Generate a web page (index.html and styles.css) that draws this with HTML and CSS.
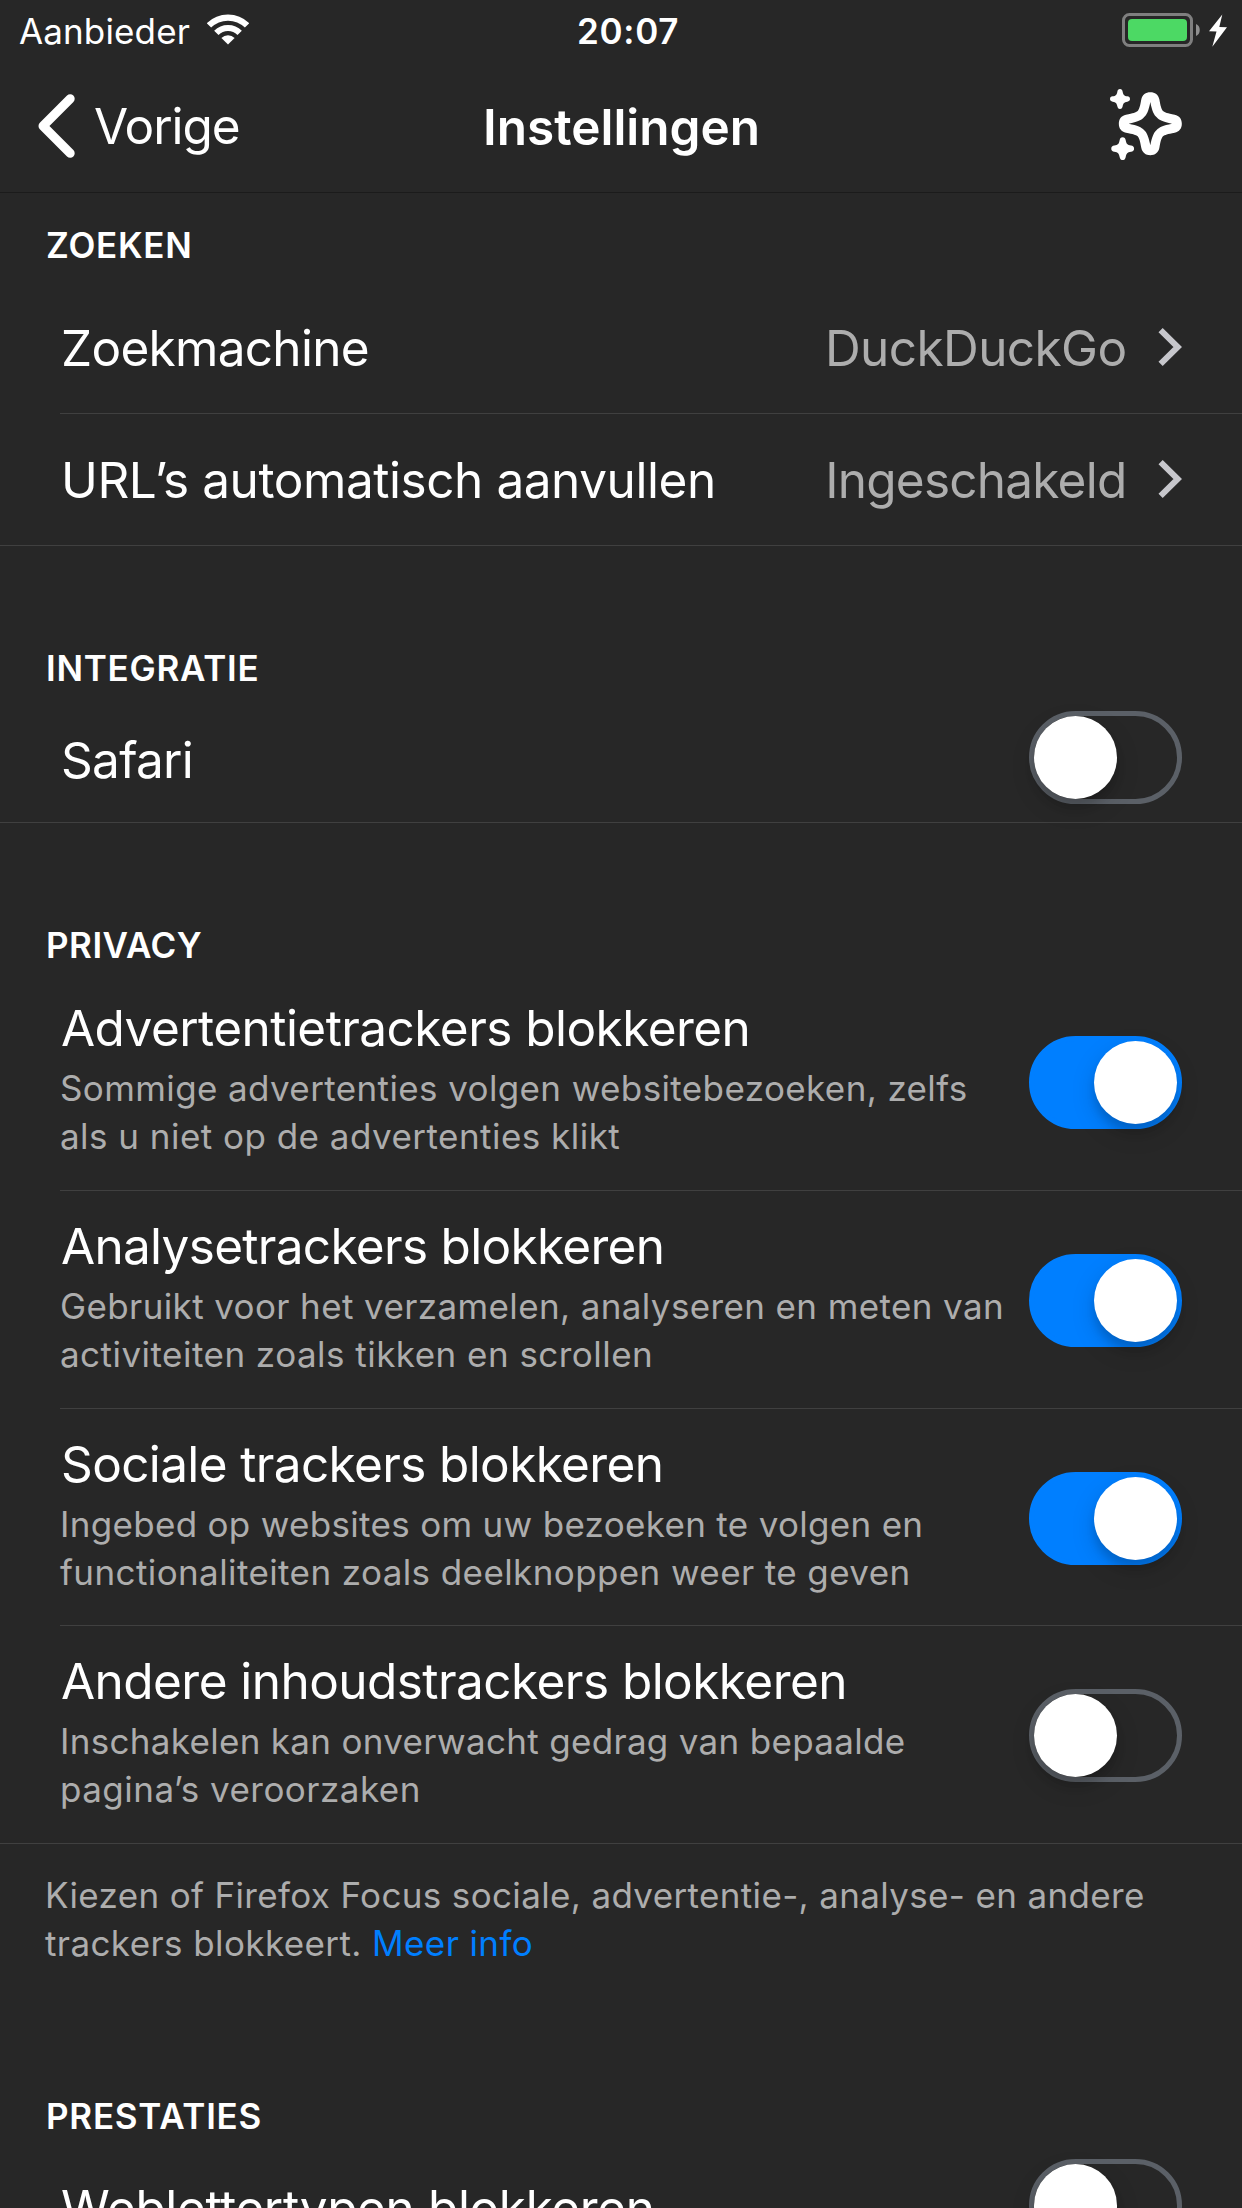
FILE: index.html
```html
<!DOCTYPE html>
<html lang="nl">
<head>
<meta charset="utf-8">
<title>Instellingen</title>
<link rel="stylesheet" href="styles.css">
</head>
<body>
<div class="screen">
  <div class="status">
    <div class="carrier">
      <span>Aanbieder</span>
      <svg class="wifi" viewBox="-63 -91 126 92" width="42" height="31">
        <g fill="none" stroke="#fff" stroke-width="18.5">
          <path d="M-57.2 -57.2A81 81 0 0 1 57.2 -57.2"/>
          <path d="M-35 -35A49.5 49.5 0 0 1 35 -35"/>
        </g>
        <path fill="#fff" d="M0 0L-19.8 -19.8A28 28 0 0 1 19.8 -19.8Z"/>
      </svg>
    </div>
    <span class="time">20:07</span>
    <svg class="battery" viewBox="0 0 108 36" width="108" height="36">
      <rect x="1.5" y="1.5" width="68" height="31" rx="6" fill="none" stroke="#7f7f7f" stroke-width="3"/>
      <rect x="6" y="6" width="59" height="22" rx="4" fill="#4cd964"/>
      <path fill="#8f8f8f" d="M74 11C79 12.5 79 21.5 74 23Z"/>
      <path fill="#fff" d="M100.3 1.5L87 18.3L94.5 18.5L90.3 33.7L105 14.3L97.3 14Z"/>
    </svg>
  </div>

  <header class="nav">
    <svg class="back-icon" viewBox="0 0 37 64" width="37" height="64">
      <path d="M32.2 4.8L5 32L32.2 59.2" fill="none" stroke="#fff" stroke-width="9" stroke-linecap="round" stroke-linejoin="round"/>
    </svg>
    <span class="back">Vorige</span>
    <h1 class="title">Instellingen</h1>
    <svg class="sparkle" viewBox="-121 -104 216 214" width="72" height="71.33">
      <g fill="#fff">
        <path fill-rule="evenodd" d="M0 -94.5C14 -94.5 24 -87 27 -73C31 -51 33 -44 38 -38C44 -33 51 -31 73 -27C87 -24 94.5 -14 94.5 0C94.5 14 87 24 73 27C51 31 44 33 38 38C33 44 31 51 27 73C24 87 14 94.5 0 94.5C-14 94.5 -24 87 -27 73C-31 51 -33 44 -38 38C-44 33 -51 31 -73 27C-87 24 -94.5 14 -94.5 0C-94.5 -14 -87 -24 -73 -27C-51 -31 -44 -33 -38 -38C-33 -44 -31 -51 -27 -73C-24 -87 -14 -94.5 0 -94.5ZM0 -65C5 -38 11 -26 19 -19C26 -11 38 -5 65 0C38 5 26 11 19 19C11 26 5 38 0 65C-5 38 -11 26 -19 19C-26 11 -38 5 -65 0C-38 -5 -26 -11 -19 -19C-11 -26 -5 -38 0 -65Z"/>
        <path transform="translate(-91 -74)" d="M0 -30C5 -30 7 -27 8 -22C10 -12 12 -10 22 -8C27 -7 30 -5 30 0C30 5 27 7 22 8C12 10 10 12 8 22C7 27 5 30 0 30C-5 30 -7 27 -8 22C-10 12 -12 10 -22 8C-27 7 -30 5 -30 0C-30 -5 -27 -7 -22 -8C-12 -10 -10 -12 -8 -22C-7 -27 -5 -30 0 -30Z"/>
        <path transform="translate(-83 75) scale(1.14)" d="M0 -30C5 -30 7 -27 8 -22C10 -12 12 -10 22 -8C27 -7 30 -5 30 0C30 5 27 7 22 8C12 10 10 12 8 22C7 27 5 30 0 30C-5 30 -7 27 -8 22C-10 12 -12 10 -22 8C-27 7 -30 5 -30 0C-30 -5 -27 -7 -22 -8C-12 -10 -10 -12 -8 -22C-7 -27 -5 -30 0 -30Z"/>
      </g>
    </svg>
  </header>

  <main>
    <section>
      <h2 class="heading first">ZOEKEN</h2>
      <div class="row link">
        <span class="label search">Zoekmachine</span>
        <span class="value">DuckDuckGo</span>
        <svg class="chevron" viewBox="0 0 24 40" width="24" height="40"><path d="M2.6 3.1L19.8 20L2.6 36.9" fill="none" stroke="#c7c7cc" stroke-width="6"/></svg>
      </div>
      <div class="row link last">
        <span class="label auto">URL’s automatisch aanvullen</span>
        <span class="value enabled">Ingeschakeld</span>
        <svg class="chevron" viewBox="0 0 24 40" width="24" height="40"><path d="M2.6 3.1L19.8 20L2.6 36.9" fill="none" stroke="#c7c7cc" stroke-width="6"/></svg>
      </div>
    </section>

    <section>
      <h2 class="heading">INTEGRATIE</h2>
      <div class="row single last">
        <span class="label search">Safari</span>
        <span class="switch"><i class="knob"></i></span>
      </div>
    </section>

    <section>
      <h2 class="heading privacy">PRIVACY</h2>
      <div class="row tracker">
        <div class="text">
          <span class="label">Advertentietrackers blokkeren</span>
          <p class="desc">Sommige advertenties volgen websitebezoeken, zelfs<br><span class="loose">als u niet op de advertenties klikt</span></p>
        </div>
        <span class="switch on"><i class="knob"></i></span>
      </div>
      <div class="row tracker">
        <div class="text">
          <span class="label analyse">Analysetrackers blokkeren</span>
          <p class="desc">Gebruikt voor het verzamelen, analyseren en meten van<br><span class="loose">activiteiten zoals tikken en scrollen</span></p>
        </div>
        <span class="switch on"><i class="knob"></i></span>
      </div>
      <div class="row tracker short">
        <div class="text">
          <span class="label social">Sociale trackers blokkeren</span>
          <p class="desc content">Ingebed op websites om uw bezoeken te volgen en<br><span class="medium">functionaliteiten zoals deelknoppen weer te geven</span></p>
        </div>
        <span class="switch on"><i class="knob"></i></span>
      </div>
      <div class="row tracker last">
        <div class="text">
          <span class="label">Andere inhoudstrackers blokkeren</span>
          <p class="desc content">Inschakelen kan onverwacht gedrag van bepaalde<br><span class="loose">pagina’s veroorzaken</span></p>
        </div>
        <span class="switch"><i class="knob"></i></span>
      </div>
      <p class="footer">Kiezen of Firefox Focus sociale, advertentie-, analyse- en andere<br><span class="medium">trackers blokkeert. <a class="more">Meer info</a></span></p>
    </section>

    <section>
      <h2 class="heading">PRESTATIES</h2>
      <div class="row single last">
        <span class="label fonts">Weblettertypen blokkeren</span>
        <span class="switch"><i class="knob"></i></span>
      </div>
    </section>
  </main>
</div>
</body>
</html>
```
FILE: styles.css
```css
* {
  box-sizing: border-box;
}

body {
  margin: 0;
  background: #272727;
  color: #fff;
  font-family: Inter, "Liberation Sans", sans-serif;
  font-size: 49.5px;
  line-height: 60px;
}

h1, h2, p {
  margin: 0;
  font-weight: 400;
}

svg {
  display: block;
  flex: none;
}

.screen {
  width: 1242px;
  height: 2208px;
  overflow: hidden;
}

/* Status bar */
.status {
  display: flex;
  align-items: flex-start;
  height: 60px;
  padding: 9px 14px 0 19px;
  font-size: 35px;
  line-height: 44px;
}

.carrier {
  display: flex;
  gap: 17px;
  width: 558px;
  letter-spacing: 0.13px;
}

.wifi {
  margin-top: 5px;
}

.time {
  font-weight: 600;
  letter-spacing: 0.7px;
}

.battery {
  margin: 4px -2px 0 auto;
}

/* Navigation bar */
.nav {
  display: flex;
  align-items: flex-start;
  height: 133px;
  padding: 32px 60px 0 38px;
  border-bottom: 1px solid #1b1b1b;
}

.back-icon {
  margin-top: 2px;
}

.back {
  width: 389px;
  margin-top: 4px;
  margin-left: 19px;
  letter-spacing: -1.07px;
}

.title {
  margin-top: 5px;
  font-size: 49.5px;
  font-weight: 600;
}

.sparkle {
  margin-top: -3px;
  margin-left: auto;
}

/* Sections */
.heading {
  height: 150px;
  padding: 100px 46px 0;
  font-size: 35px;
  font-weight: 600;
  line-height: 44px;
  letter-spacing: 0.75px;
}

.heading.first {
  height: 89px;
  padding-top: 30px;
}

.heading.privacy {
  letter-spacing: 0.5px;
}

.row {
  display: flex;
  align-items: flex-start;
  margin-left: 60px;
  padding-right: 60px;
  border-bottom: 1px solid #404040;
}

.row.last {
  margin-left: 0;
  padding-left: 60px;
}

.label {
  display: block;
  padding-left: 1px;
  letter-spacing: -0.55px;
}

.label.search {
  letter-spacing: -0.7px;
}

.label.auto {
  letter-spacing: -0.44px;
}

.label.analyse {
  letter-spacing: -0.7px;
}

.label.social {
  letter-spacing: -0.63px;
}

.label.fonts {
  letter-spacing: -0.37px;
}

.link {
  height: 132px;
  padding-top: 36px;
}

.value {
  margin-left: auto;
  color: #adadad;
  letter-spacing: -0.6px;
}

.value.enabled {
  letter-spacing: -0.76px;
}

.chevron {
  margin-top: 9px;
  margin-left: 31.5px;
}

.single {
  height: 127px;
  padding-top: 34px;
}

.single .switch {
  margin-top: -19px;
}

.tracker {
  height: 218px;
  padding-top: 25px;
}

.tracker.short {
  height: 217px;
}

.tracker .switch {
  margin-top: 38px;
}

.desc {
  margin-top: 6px;
  color: #adadad;
  font-size: 35px;
  line-height: 48px;
  letter-spacing: 0.38px;
  white-space: nowrap;
}

.desc.content {
  letter-spacing: 0.31px;
}

.loose {
  letter-spacing: 0.47px;
}

.medium {
  letter-spacing: 0.4px;
}

.footer {
  height: 150px;
  padding: 27px 45px 0;
  color: #adadad;
  font-size: 35px;
  line-height: 48px;
  letter-spacing: 0.35px;
  white-space: nowrap;
}

.more {
  color: #007fff;
}

/* Switches */
.switch {
  display: flex;
  flex: none;
  width: 153px;
  height: 93px;
  margin-left: auto;
  border: 5px solid #5b6067;
  border-radius: 47px;
}

.knob {
  width: 83px;
  height: 83px;
  border-radius: 50%;
  background: #fff;
  box-shadow: 0 9px 24px rgba(0, 0, 0, 0.15), 0 8px 8px rgba(0, 0, 0, 0.12);
}

.switch.on {
  justify-content: flex-end;
  border-color: #007fff;
  background: #007fff;
}
```
